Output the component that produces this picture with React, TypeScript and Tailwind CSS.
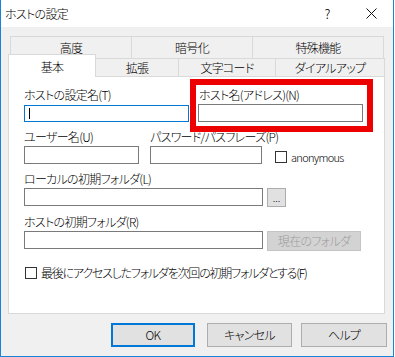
import type { ReactNode } from 'react'

// Win10-style "host settings" dialog, basic tab

function Field({ label, width }: { label: string; width: string }) {
  return (
    <div className={`flex flex-col ${width}`}>
      <div className="h-[14px] leading-[14px] whitespace-nowrap">{label}</div>
      <div className="mt-[2px] h-[18px] w-full bg-white border border-[#7a7a7a]" />
    </div>
  )
}

function Check({ children, small }: { children: ReactNode; small?: boolean }) {
  return (
    <div className="flex items-center gap-[4px] whitespace-nowrap">
      <div className="w-[12px] h-[12px] border border-[#333333] bg-white shrink-0" />
      <span className={small ? 'text-[11px] leading-[14px]' : 'leading-[14px] tracking-[-1.2px]'}>{children}</span>
    </div>
  )
}

function Button({
  children,
  className,
}: {
  children: ReactNode
  className: string
}) {
  return (
    <div className={`flex items-center justify-center border whitespace-nowrap ${className}`}>{children}</div>
  )
}

export default function App() {
  return (
    <div className="w-[395px] h-[357px] bg-white text-[12px] text-black font-light tracking-[-0.7px] font-['Noto_Sans_CJK_JP',sans-serif] [font-feature-settings:'palt']">
      <div className="w-[394px] h-[357px] border-x border-b border-[#1883d7] bg-[#f0f0f0] flex flex-col">
        {/* Title bar */}
        <div className="h-[27px] bg-white flex items-center shrink-0">
          <span className="pl-[4px] pt-[1px] text-[12px]">ホストの設定</span>
          <div className="ml-auto flex h-full">
            <div className="w-[44px] flex items-center justify-center text-[13px]">?</div>
            <div className="w-[44px] flex items-center justify-center">
              <svg width="11" height="11" viewBox="0 0 11 11">
                <path d="M0.5 0.5 L10.5 10.5 M10.5 0.5 L0.5 10.5" stroke="#111" strokeWidth="1" />
              </svg>
            </div>
          </div>
        </div>

        <div className="flex-1 pl-[7px] pr-[8px] pt-[9px] flex flex-col">
          {/* Upper tab row */}
          <div className="flex h-[22px] ml-[2px]">
            <div className="w-[121px] border-l border-t border-[#d9d9d9] flex items-center justify-center">高度</div>
            <div className="w-[121px] border-l border-t border-[#d9d9d9] flex items-center justify-center">暗号化</div>
            <div className="w-[132px] border-x border-t border-[#d9d9d9] flex items-center justify-center">特殊機能</div>
          </div>

          {/* Lower tab row */}
          <div className="flex h-[18px] items-end relative z-10">
            <div className="w-[88px] h-[23px] -mb-px bg-white border-x border-t border-[#d9d9d9] flex items-start justify-center pt-[3px]">
              基本
            </div>
            <div className="w-[83px] h-[18px] border-t border-r border-[#d9d9d9] flex items-center justify-center">拡張</div>
            <div className="w-[97px] h-[18px] border-t border-r border-[#d9d9d9] flex items-center justify-center">文字コード</div>
            <div className="w-[109px] h-[18px] border-t border-r border-[#d9d9d9] flex items-center justify-center">ダイアルアップ</div>
          </div>

          {/* Panel */}
          <div className="relative h-[238px] bg-white border border-[#d9d9d9] pl-[15px] pt-[11px]">
            <div className="flex">
              <div className="flex flex-col">
                <div className="h-[14px] leading-[14px]">ホストの設定名(T)</div>
                <div className="mt-[3px] h-[17px] w-[165px] bg-white border border-[#0078d7] flex items-center">
                  <div className="ml-[4px] w-px h-[11px] bg-black" />
                </div>
              </div>
              <div className="ml-[9px] flex flex-col">
                <div className="h-[14px] leading-[14px] pl-[1px]">ホスト名(アドレス)(N)</div>
                <div className="mt-[2px] h-[18px] w-[165px] bg-white border border-[#7a7a7a]" />
              </div>
            </div>

            <div className="flex mt-[8px]">
              <Field label="ユーザー名(U)" width="w-[115px]" />
              <div className="ml-[11px]">
                <Field label="パスワード/パスフレーズ(P)" width="w-[112px]" />
              </div>
              <div className="ml-[13px] pt-[20px]">
                <Check small>anonymous</Check>
              </div>
            </div>

            <div className="mt-[8px] flex flex-col">
              <div className="h-[14px] leading-[14px]">ローカルの初期フォルダ(L)</div>
              <div className="mt-[2px] flex">
                <div className="h-[18px] w-[239px] bg-white border border-[#7a7a7a]" />
                <Button className="ml-[4px] w-[19px] h-[19px] bg-[#e1e1e1] border-[#adadad] items-end pb-[3px] text-[10px] leading-[10px] tracking-normal">
                  ...
                </Button>
              </div>
            </div>

            <div className="mt-[8px] flex flex-col">
              <div className="h-[14px] leading-[14px]">ホストの初期フォルダ(R)</div>
              <div className="mt-[2px] flex">
                <div className="h-[18px] w-[239px] bg-white border border-[#7a7a7a]" />
                <Button className="ml-[4px] w-[94px] h-[20px] bg-[#d3d3d3] border-[#c4c4c4] text-[#9c9c9c]">
                  現在のフォルダ
                </Button>
              </div>
            </div>

            <div className="mt-[15px] ml-[1px]">
              <Check>最後にアクセスしたフォルダを次回の初期フォルダとする(F)</Check>
            </div>

            {/* annotation frame over the host name field */}
            <div className="absolute left-[181px] top-[2px] w-[183px] h-[53px] border-[6px] border-[#ec0000] pointer-events-none" />
          </div>

          {/* Dialog buttons */}
          <div className="mt-[9px] flex justify-end -mr-[2px]">
            <Button className="w-[84px] h-[24px] bg-[#e1e1e1] border-2 border-[#0078d7]">OK</Button>
            <Button className="ml-[12px] w-[85px] h-[24px] bg-[#e1e1e1] border-[#adadad]">キャンセル</Button>
            <Button className="ml-[9px] w-[86px] h-[24px] bg-[#e1e1e1] border-[#adadad]">ヘルプ</Button>
          </div>
        </div>
      </div>
    </div>
  )
}
